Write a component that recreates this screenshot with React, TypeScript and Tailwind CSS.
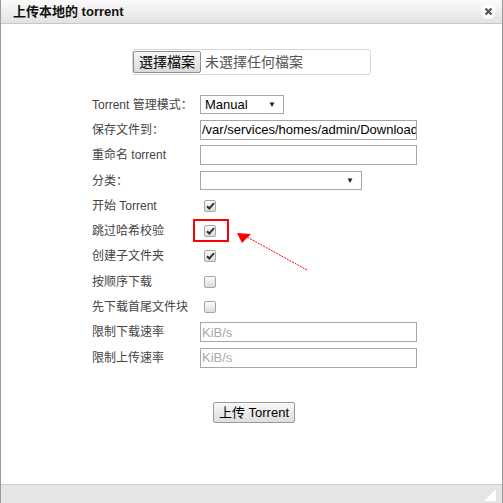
import React from "react";

const font = "font-['Liberation_Sans','Noto_Sans_CJK_SC',sans-serif]";

const Checkbox = ({ checked }: { checked: boolean }) => (
  <span className="ml-[4px] flex h-[12px] w-[12px] items-center justify-center rounded-[2px] border border-[#a5a5a5] bg-gradient-to-b from-[#fcfcfc] to-[#dcdcdc]">
    {checked && (
      <svg width="9" height="8" viewBox="0 0 9 8">
        <path d="M1 4.2 L3.3 6.5 L8 1.2" fill="none" stroke="#333" strokeWidth="2" />
      </svg>
    )}
  </span>
);

const Select = ({ value, className }: { value: string; className: string }) => (
  <div
    className={`flex h-[19px] items-center justify-between border border-[#a6a6a6] bg-white pl-[4px] pr-[7px] text-[13px] text-black ${className}`}
  >
    <span>{value}</span>
    <span className="text-[8px] text-[#222]">▼</span>
  </div>
);

const TextInput = ({ value, placeholder }: { value?: string; placeholder?: string }) => (
  <div className="flex h-[20px] w-[217px] items-center overflow-hidden whitespace-nowrap border border-[#a6a6a6] bg-white pl-[1px] text-[13px]">
    {value ? <span className="text-black">{value}</span> : <span className="text-[#aaa]">{placeholder}</span>}
  </div>
);

const rows: { label: string; control: React.ReactNode }[] = [
  { label: "Torrent 管理模式：", control: <Select value="Manual" className="w-[84px]" /> },
  { label: "保存文件到：", control: <TextInput value="/var/services/homes/admin/Download" /> },
  { label: "重命名 torrent", control: <TextInput /> },
  { label: "分类：", control: <Select value="" className="w-[162px]" /> },
  { label: "开始 Torrent", control: <Checkbox checked /> },
  { label: "跳过哈希校验", control: <Checkbox checked /> },
  { label: "创建子文件夹", control: <Checkbox checked /> },
  { label: "按顺序下载", control: <Checkbox checked={false} /> },
  { label: "先下载首尾文件块", control: <Checkbox checked={false} /> },
  { label: "限制下载速率", control: <TextInput placeholder="KiB/s" /> },
  { label: "限制上传速率", control: <TextInput placeholder="KiB/s" /> },
];

export default function App() {
  return (
    <div className={`relative flex h-[503px] w-[503px] flex-col border-x border-[#9a9a9a] bg-white ${font}`}>
      {/* title bar */}
      <div className="flex h-[24px] shrink-0 items-center justify-between border-b border-[#c8c8c8] bg-gradient-to-b from-[#fbfbfb] to-[#e2e2e2] pl-[12px] pr-[6px]">
        <span className="text-[13px] font-bold text-[#111]">上传本地的 torrent</span>
        <span className="flex h-[15px] w-[15px] items-center justify-center rounded-full bg-white">
          <svg width="9" height="9" viewBox="0 0 9 9">
            <path d="M1.5 1.5 L7.5 7.5 M7.5 1.5 L1.5 7.5" stroke="#555" strokeWidth="2.2" />
          </svg>
        </span>
      </div>

      {/* body */}
      <div className="flex flex-1 flex-col">
        <div className="mt-[25px] ml-[131px] flex h-[26px] w-[239px] items-center rounded-[3px] border border-[#d6d6d6]">
          <span className="flex h-[22px] w-[68px] items-center justify-center rounded-[2px] border border-[#8f8f8f] bg-gradient-to-b from-[#f6f6f6] to-[#dadada] text-[14px] text-black">
            選擇檔案
          </span>
          <span className="ml-[4px] text-[14px] text-[#555]">未選擇任何檔案</span>
        </div>

        <div className="mt-[17px] ml-[91px] flex flex-col">
          {rows.map((row) => (
            <div key={row.label} className="flex h-[25.3px] items-center">
              <span className="w-[108px] shrink-0 text-[12px] text-[#444]">{row.label}</span>
              {row.control}
            </div>
          ))}
        </div>

        <div className="mt-[32px] ml-[212px]">
          <span className="flex h-[21px] w-[82px] items-center justify-center rounded-[2px] border border-[#9a9a9a] bg-gradient-to-b from-[#f7f7f7] to-[#dedede] text-[13px] text-black">
            上传 Torrent
          </span>
        </div>
      </div>

      {/* footer */}
      <div className="flex h-[19px] shrink-0 items-end justify-end border-t border-[#cfcfcf] bg-[#e5e5e5] pr-[6px] pb-[2px]">
        <svg width="12" height="12" viewBox="0 0 12 12">
          <polygon points="12,0 12,12 0,12" fill="#fff" />
        </svg>
      </div>

      {/* annotation */}
      <svg className="pointer-events-none absolute left-[-1px] top-0" width="503" height="503" viewBox="0 0 503 503">
        <rect x="194" y="220" width="34" height="21" fill="none" stroke="#ff0000" strokeWidth="2" />
        <line x1="307" y1="270" x2="247" y2="237" stroke="#ff0000" strokeWidth="1" strokeDasharray="2 1" />
        <polygon points="237,233 251,234 242,243" fill="#ff0000" />
      </svg>
    </div>
  );
}
